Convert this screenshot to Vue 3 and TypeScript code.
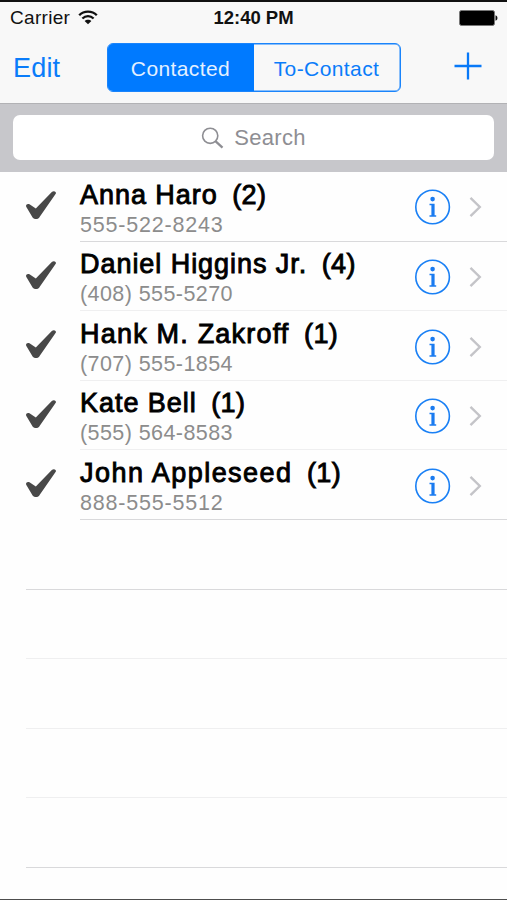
<script setup lang="ts">
import { ref, computed } from 'vue'

interface Contact {
  name: string
  count: number
  phone: string
  tracking: 'normal' | 'wide' | 'wider'
}

const contacts = ref<Contact[]>([
  { name: 'Anna Haro', count: 2, phone: '555-522-8243', tracking: 'normal' },
  { name: 'Daniel Higgins Jr.', count: 4, phone: '(408) 555-5270', tracking: 'normal' },
  { name: 'Hank M. Zakroff', count: 1, phone: '(707) 555-1854', tracking: 'wide' },
  { name: 'Kate Bell', count: 1, phone: '(555) 564-8583', tracking: 'normal' },
  { name: 'John Appleseed', count: 1, phone: '888-555-5512', tracking: 'wider' },
])

const tabs = ['Contacted', 'To-Contact'] as const
const active = ref<(typeof tabs)[number]>('Contacted')
const emptyRows = computed(() => 10 - contacts.value.length)
</script>

<template>
  <main class="phone">
    <header class="top">
      <div class="status">
        <div class="carrier">
          <span>Carrier</span>
          <svg width="20" height="15" viewBox="0 0 20 15" fill="none" stroke="#111" stroke-width="2.3">
            <path d="M1.2 5.2C6 .3 14 .3 18.8 5.2" />
            <path d="M4.4 8.5c3.2-3.1 8-3.1 11.2 0" />
            <path d="M10 14.2 6.6 11c1.8-1.7 5-1.7 6.8 0z" fill="#111" stroke="none" />
          </svg>
        </div>
        <span class="time">12:40 PM</span>
        <svg class="battery" width="39" height="16" viewBox="0 0 39 16">
          <rect x=".5" y=".5" width="35" height="15" rx="2" fill="#000" stroke="#777" />
          <path d="M36.5 5.2c2.6.8 2.6 4.8 0 5.6z" fill="#111" />
        </svg>
      </div>
      <nav class="bar">
        <button class="edit">Edit</button>
        <div class="segments">
          <button
            v-for="tab in tabs"
            :key="tab"
            class="segment"
            :class="{ on: active === tab }"
            @click="active = tab"
          >{{ tab }}</button>
        </div>
        <button class="add" aria-label="Add">
          <svg width="28" height="28" viewBox="0 0 28 28" fill="none" stroke="#0879f8" stroke-width="2.3">
            <path d="M14 .5v27M.5 14h27" />
          </svg>
        </button>
      </nav>
    </header>

    <div class="search">
      <div class="field">
        <svg width="23" height="22" viewBox="0 0 23 22" fill="none" stroke="#8e8e93">
          <circle cx="9.2" cy="8.8" r="7.6" stroke-width="1.6" />
          <path d="m14.7 14.4 6.8 6.2" stroke-width="2.3" />
        </svg>
        <span>Search</span>
      </div>
    </div>

    <ul class="list">
      <li v-for="(c, i) in contacts" :key="c.name" class="row">
        <svg class="check" width="32" height="30" viewBox="0 0 32 30">
          <path
            d="M1.2 16.8C.4 14.5 2.5 13.3 4.500 14.2L10.8 18.6 26.8 2C28.5.3 31.6 1.3 30.9 3.6L14.6 27C13.3 29.7 8.8 29.7 7.3 27z"
            fill="#484848"
          />
        </svg>
        <div class="body" :class="{ strong: i === 0 || i === contacts.length - 1 }">
          <div class="text">
            <div class="title">
              <span class="name" :class="c.tracking">{{ c.name }}</span>
              <span class="count">({{ c.count }})</span>
            </div>
            <div class="number" :class="{ grouped: c.phone.startsWith('(') }">{{ c.phone }}</div>
          </div>
          <svg class="info" width="36" height="36" viewBox="0 0 36 36">
            <circle cx="17.6" cy="18" r="16.8" fill="none" stroke="#1a80f5" stroke-width="1.6" />
            <circle cx="17.6" cy="10.1" r="2.3" fill="#1a7bf0" />
            <path d="M14.5 14.7h5.1v11.6h1.6v1.5h-6.7v-1.5h1.9v-10.1h-1.9z" fill="#1a7bf0" />
          </svg>
          <svg class="chevron" width="13" height="22" viewBox="0 0 13 22" fill="none" stroke="#c4c4c8" stroke-width="2.4">
            <path d="m1.5 1.8 9.3 9.2-9.3 9.2" />
          </svg>
        </div>
      </li>
      <li v-for="n in emptyRows" :key="n" class="row">
        <div class="blank" :class="{ strong: n === 1 || n === emptyRows }"></div>
      </li>
    </ul>
  </main>
</template>

<style>
body {
  margin: 0;
  background: #fff;
}
</style>

<style scoped>
.phone {
  box-sizing: border-box;
  width: 507px;
  height: 900px;
  overflow: hidden;
  display: flex;
  flex-direction: column;
  background: #fefefe;
  border-top: 2px solid #111;
  border-bottom: 1px solid #4d4d4d;
  font-family: 'Liberation Sans', Arial, sans-serif;
  color: #000;
}
button {
  padding: 0;
  border: 0;
  background: none;
  font: inherit;
  color: #0a7cfa;
}
svg {
  display: block;
  flex: none;
}
.top {
  box-sizing: border-box;
  height: 102px;
  flex: none;
  background: #f8f8f8;
  border-bottom: 1px solid #b2b2b5;
}
.status {
  display: grid;
  grid-template-columns: 1fr auto 1fr;
  align-items: center;
  height: 32px;
  padding: 0 9px 0 10px;
  font-size: 19px;
  color: #111;
}
.carrier {
  display: flex;
  align-items: center;
  gap: 8px;
  letter-spacing: 0.3px;
}
.carrier svg {
  margin-top: -2px;
}
.time {
  font-size: 18.5px;
  font-weight: 700;
  margin-right: 1px;
}
.battery {
  justify-self: end;
}
.bar {
  display: flex;
  align-items: center;
  height: 69px;
  padding: 0 25px 2px 13px;
  box-sizing: border-box;
}
.edit {
  width: 94px;
  padding-top: 2px;
  text-align: left;
  font-size: 27px;
  letter-spacing: 0.2px;
}
.segments {
  display: grid;
  grid-template-columns: 146px 146px;
  box-sizing: border-box;
  width: 294px;
  height: 49px;
  border: 1px solid #1a84fb;
  border-radius: 6px;
  overflow: hidden;
  box-shadow: inset 0 0 0 0.5px #1a84fb;
}
.segment {
  padding: 2px 1px 0 0;
  font-size: 21px;
  letter-spacing: 0.4px;
}
.segment.on {
  background: #007aff;
  color: #e3f0ff;
}
.add {
  margin-left: auto;
  margin-top: -3px;
}
.search {
  box-sizing: border-box;
  height: 68px;
  flex: none;
  padding: 11px 13px 12px;
  background: #c7c7cb;
}
.field {
  display: flex;
  align-items: center;
  justify-content: center;
  gap: 10px;
  height: 45px;
  background: #fff;
  border-radius: 7px;
  font-size: 22px;
  letter-spacing: 0.3px;
  color: #8e8e93;
}
.list {
  margin: 0;
  padding: 0;
  list-style: none;
}
.row {
  display: flex;
  height: 69.62px;
}
.check {
  margin: 18px 23px 0 25px;
}
.body,
.blank {
  box-sizing: border-box;
  border-bottom: 1px solid #efeff0;
  flex: 1;
}
.blank {
  margin-left: 26px;
}
.strong {
  border-bottom-color: #d9d9db;
}
.body {
  display: flex;
  align-items: center;
  padding-top: 2px;
  padding-right: 25px;
}
.text {
  flex: 1;
  align-self: flex-start;
  padding-top: 5.6px;
  white-space: nowrap;
}
.title {
  display: flex;
  gap: 14.5px;
  font-size: 27px;
  line-height: 31px;
  -webkit-text-stroke: 0.9px #000;
}
.name {
  letter-spacing: 0.95px;
}
.name.wide {
  letter-spacing: 1.2px;
}
.name.wider {
  letter-spacing: 1.45px;
}
.count {
  letter-spacing: 0.4px;
}
.number {
  font-size: 21.5px;
  line-height: 29px;
  letter-spacing: 0.8px;
  color: #8c8c8c;
}
.number.grouped {
  letter-spacing: 0.42px;
}
.chevron {
  margin-left: 18px;
}
</style>
